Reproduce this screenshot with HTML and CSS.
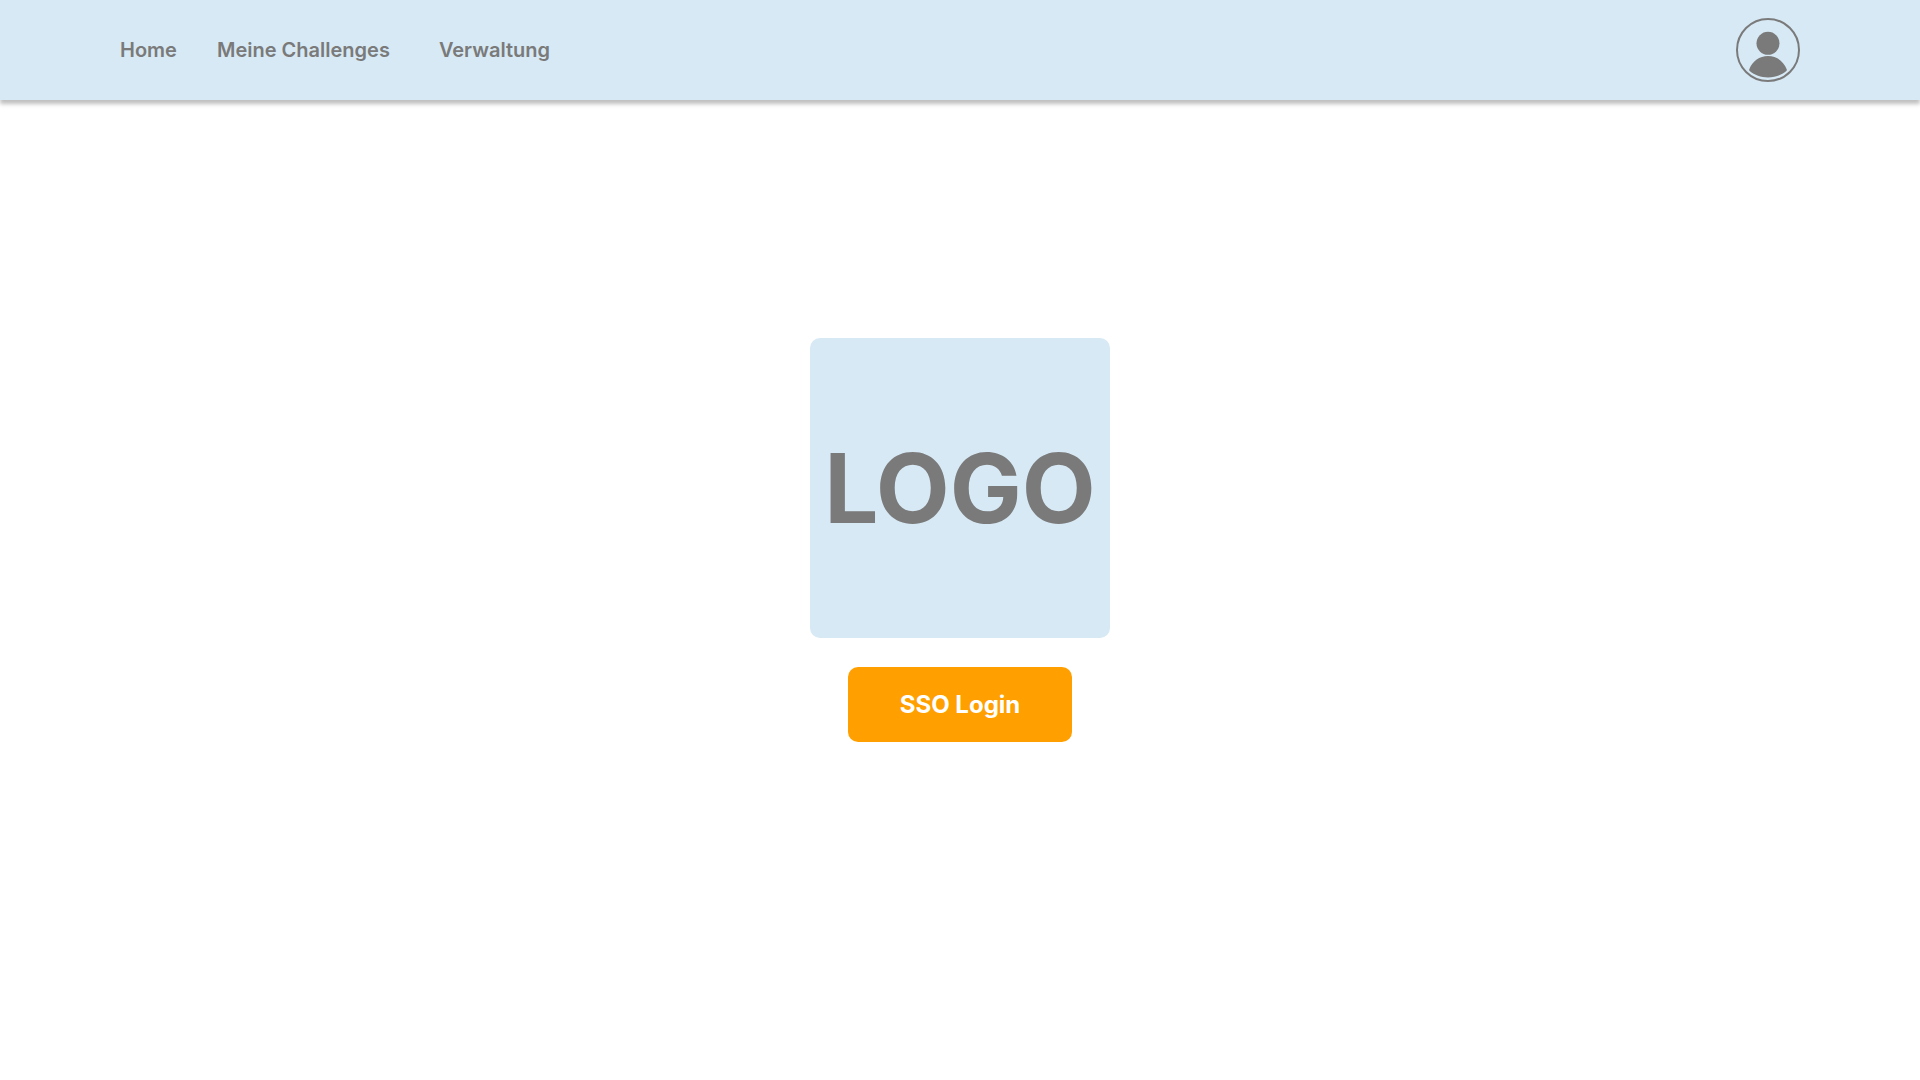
FILE: index.html
```html
<!DOCTYPE html>
<html lang="de">
<head>
<meta charset="utf-8">
<meta name="viewport" content="width=device-width, initial-scale=1">
<title>Login</title>
<link rel="stylesheet" href="styles.css">
</head>
<body>
<header class="topbar">
  <nav class="nav">
    <a class="nav-link" href="#">Home</a>
    <a class="nav-link nav-link-wide" href="#">Meine Challenges</a>
    <a class="nav-link" href="#">Verwaltung</a>
  </nav>
  <a class="profile" href="#" aria-label="Profil">
    <svg class="profile-icon" viewBox="0 0 64 64" aria-hidden="true">
      <circle cx="32" cy="32" r="31" fill="none" stroke="#7a7a7a" stroke-width="2"/>
      <circle cx="32" cy="25.300" r="11.500" fill="#7a7a7a"/>
      <path d="M13.300 51.200C16.500 43 23.500 38 32 38s15.500 5 18.700 13.200c.3.800.2 1.300-.4 1.900C45.500 57.200 39 59.500 32 59.500s-13.500-2.300-18.300-6.400c-.6-.6-.7-1.100-.4-1.900z" fill="#7a7a7a"/>
    </svg>
  </a>
</header>
<main class="login">
  <div class="logo">LOGO</div>
  <button class="login-button" type="button">SSO Login</button>
</main>
</body>
</html>
```
FILE: styles.css
```css
* {
  box-sizing: border-box;
}

body {
  margin: 0;
  min-height: 100vh;
  display: flex;
  flex-direction: column;
  background: #fff;
  color: #7a7a7a;
  font-family: Inter, "Liberation Sans", sans-serif;
  font-optical-sizing: none;
}

.topbar {
  display: flex;
  align-items: center;
  justify-content: space-between;
  height: 100px;
  padding: 0 120px;
  background: #d7e9f5;
  box-shadow: 0 4px 4px rgba(0, 0, 0, 0.25);
}

.nav {
  display: flex;
  gap: 40px;
}

.nav-link {
  color: inherit;
  font-size: 20px;
  font-weight: 600;
  line-height: 24px;
  text-decoration: none;
}

.nav-link-wide {
  padding-right: 9px;
}

.profile,
.profile-icon {
  display: block;
  width: 64px;
  height: 64px;
}

.login {
  flex: 1;
  display: flex;
  flex-direction: column;
  align-items: center;
  justify-content: center;
  gap: 29px;
  padding-bottom: 100px;
}

.logo {
  display: flex;
  align-items: center;
  justify-content: center;
  width: 300px;
  height: 300px;
  border-radius: 10px;
  background: #d7e9f5;
  font-size: 96px;
  font-weight: 700;
  line-height: 116px;
}

.login-button {
  width: 224px;
  height: 75px;
  border: 0;
  border-radius: 10px;
  background: #ffa000;
  color: #fff;
  font: inherit;
  font-size: 24px;
  font-weight: 700;
}
```
